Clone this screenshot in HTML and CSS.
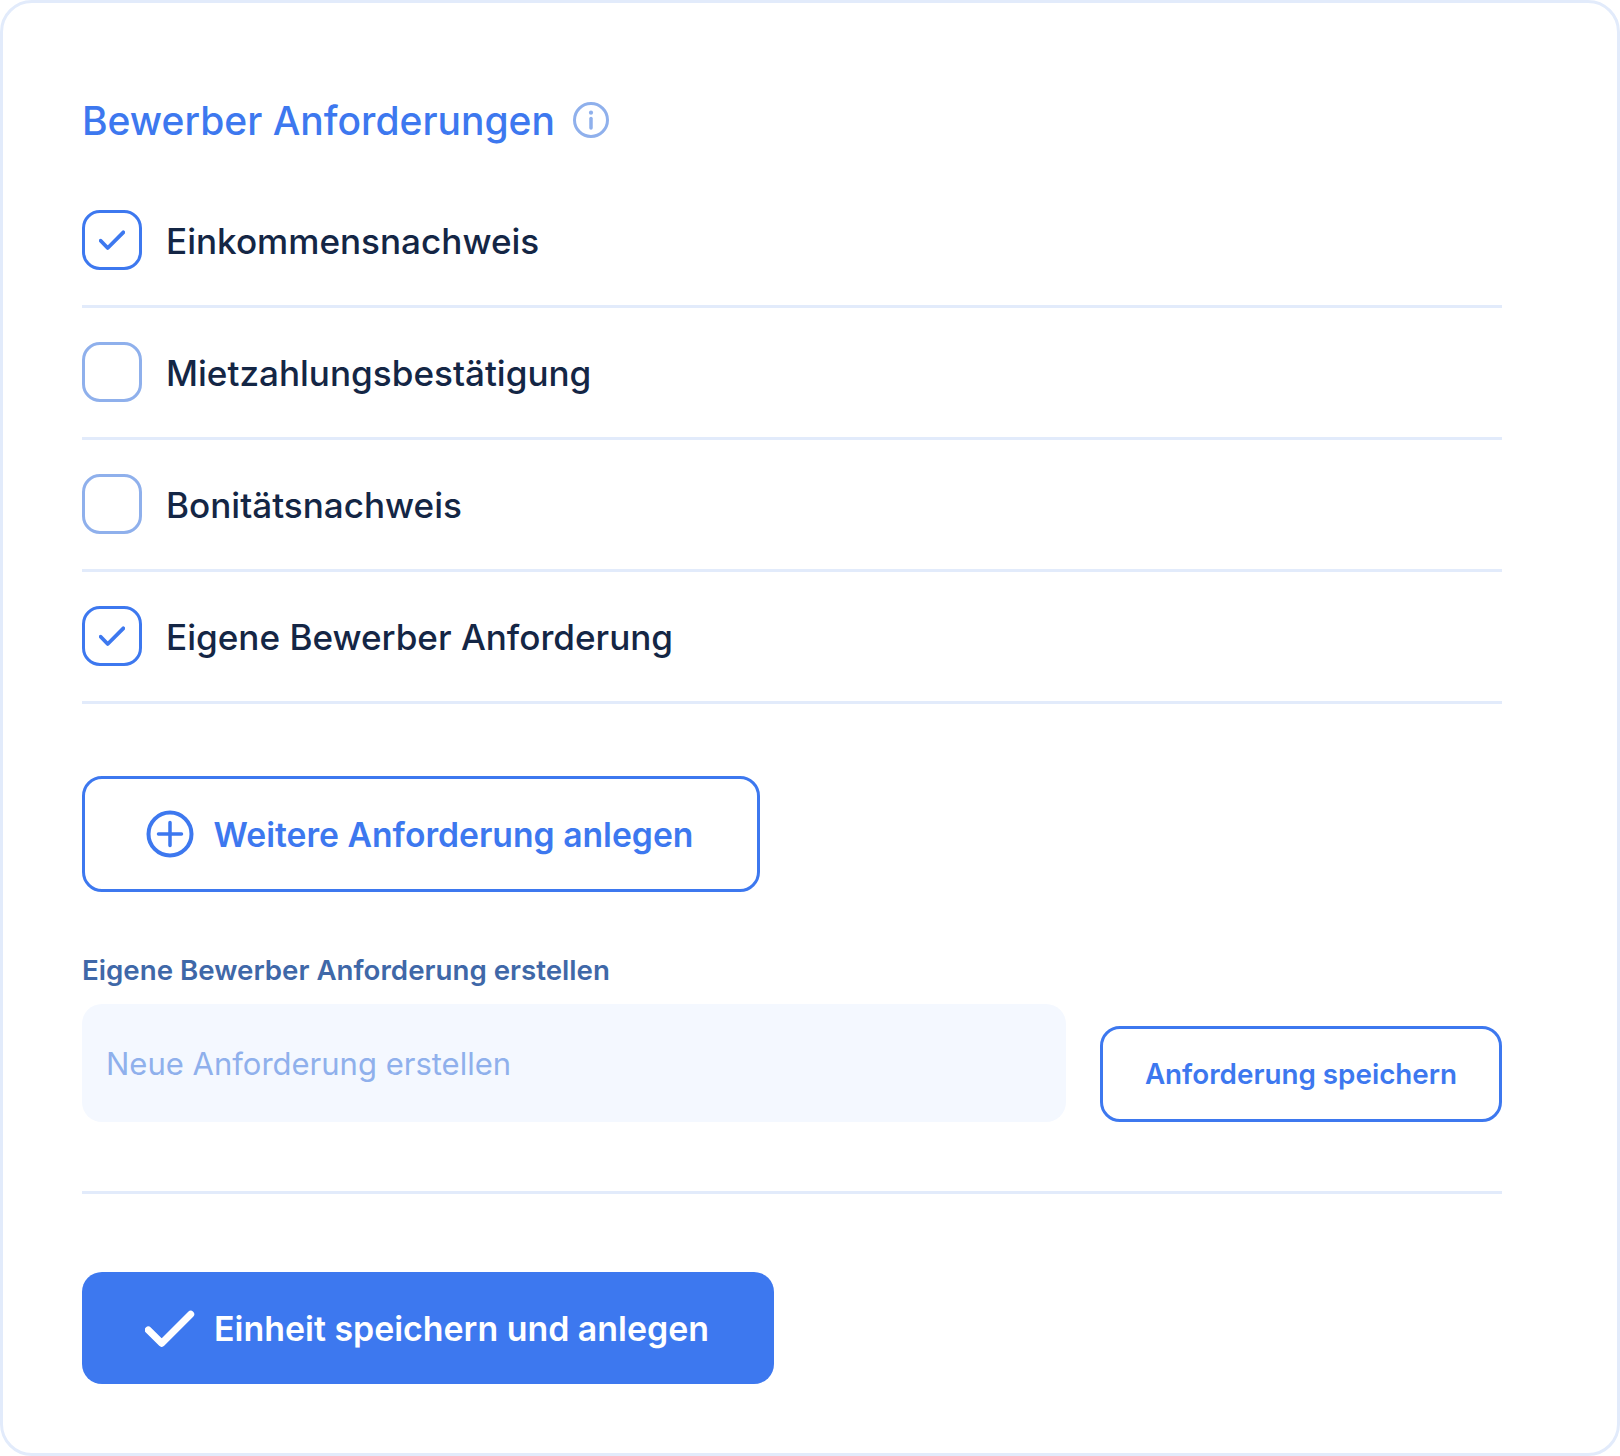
FILE: index.html
```html
<!DOCTYPE html>
<html lang="de">
<head>
    <meta charset="UTF-8">
    <title>Bewerber Anforderungen</title>
    <link rel="stylesheet" href="styles.css">
</head>
<body>
    <div class="card">
        <h2 class="title">
            <span class="title-text">Bewerber Anforderungen</span>
            <svg class="info-icon" viewBox="0 0 36 36" fill="none" stroke="#8fb0ec" stroke-width="3">
                <circle cx="18" cy="18" r="16.500"/>
                <path d="M18 16.500v9.500" stroke-width="3.500" stroke-linecap="round"/>
                <circle cx="18" cy="10.700" r="2.100" fill="#8fb0ec" stroke="none"/>
            </svg>
        </h2>

        <div class="req-row">
            <span class="checkbox checked">
                <svg viewBox="0 0 26 22" fill="none"><path d="M1.700 11.700L8.700 19 24.300 3.300" stroke="#3d78ef" stroke-width="3.800" stroke-linecap="round" stroke-linejoin="round"/></svg>
            </span>
            <span class="req-label">Einkommensnachweis</span>
        </div>
        <div class="req-row">
            <span class="checkbox"></span>
            <span class="req-label">Mietzahlungsbestätigung</span>
        </div>
        <div class="req-row">
            <span class="checkbox"></span>
            <span class="req-label">Bonitätsnachweis</span>
        </div>
        <div class="req-row">
            <span class="checkbox checked">
                <svg viewBox="0 0 26 22" fill="none"><path d="M1.700 11.700L8.700 19 24.300 3.300" stroke="#3d78ef" stroke-width="3.800" stroke-linecap="round" stroke-linejoin="round"/></svg>
            </span>
            <span class="req-label">Eigene Bewerber Anforderung</span>
        </div>

        <button class="button outline add-button">
            <svg class="plus-icon" viewBox="0 0 50 50" fill="none" stroke="#3d78ef" stroke-width="4">
                <circle cx="25" cy="25" r="21.500"/>
                <path d="M25 13.500v23M13.500 25h23" stroke-width="3.500" stroke-linecap="round"/>
            </svg>
            Weitere Anforderung anlegen
        </button>

        <label class="field-label">Eigene Bewerber Anforderung erstellen</label>
        <div class="field-row">
            <div class="input-box">Neue Anforderung erstellen</div>
            <button class="button outline save-button">Anforderung speichern</button>
        </div>

        <div class="divider"></div>

        <button class="button primary">
            <svg class="check-icon" viewBox="0 0 50 38" fill="none"><path d="M3.300 21L16.700 34.300 45.700 5.300" stroke="#fff" stroke-width="7" stroke-linecap="round" stroke-linejoin="round"/></svg>
            Einheit speichern und anlegen
        </button>
    </div>
</body>
</html>
```

FILE: styles.css
```css
* {
    box-sizing: border-box;
}
body {
    margin: 0;
    background-color: #fff;
    font-family: 'Inter', 'Liberation Sans', sans-serif;
}
.card {
    width: 1620px;
    height: 1456px;
    padding: 94px 115px 0 79px;
    border: 3px solid #e2ebfb;
    border-radius: 32px;
    background-color: #fff;
}
.title {
    display: flex;
    align-items: center;
    gap: 18px;
    height: 46px;
    margin: 0 0 33px;
    font-size: 39px;
    font-weight: 500;
    color: #3d78ef;
}
.title-text {
    padding-top: 1px;
}
.info-icon {
    width: 36px;
    height: 36px;
}
.req-row {
    display: flex;
    align-items: center;
    gap: 24px;
    height: 132px;
    border-bottom: 3px solid #e2ebfb;
}
.checkbox {
    display: flex;
    align-items: center;
    justify-content: center;
    width: 60px;
    height: 60px;
    margin-bottom: 2px;
    border: 3px solid #8fb0ec;
    border-radius: 18px;
}
.checkbox.checked {
    border-color: #3d78ef;
}
.checkbox svg {
    width: 26px;
    height: 22px;
}
.req-label {
    font-size: 35.100px;
    font-weight: 500;
    color: #142645;
}
.button {
    display: flex;
    align-items: center;
    justify-content: center;
    font-family: inherit;
    font-weight: 600;
    border-radius: 20px;
}
.outline {
    background-color: #fff;
    border: 3px solid #3d78ef;
    color: #3d78ef;
}
.add-button {
    gap: 19px;
    width: 678px;
    height: 116px;
    margin-top: 72px;
    padding: 0 4px 0 0;
    font-size: 33.700px;
}
.plus-icon {
    width: 50px;
    height: 50px;
}
.field-label {
    display: block;
    margin-top: 62px;
    font-size: 27.700px;
    font-weight: 600;
    line-height: 33px;
    color: #3f68a8;
}
.field-row {
    display: flex;
    align-items: flex-end;
    gap: 34px;
    margin-top: 17px;
}
.input-box {
    display: flex;
    align-items: center;
    width: 984px;
    height: 118px;
    padding-left: 24px;
    border-radius: 20px;
    background-color: #f4f8ff;
    font-size: 31px;
    color: #8fb0ec;
}
.save-button {
    width: 402px;
    height: 96px;
    font-size: 27.800px;
}
.divider {
    height: 3px;
    margin-top: 69px;
    background-color: #e2ebfb;
}
.primary {
    gap: 19px;
    width: 692px;
    height: 112px;
    margin-top: 78px;
    padding: 0 2px 0 0;
    border: none;
    background-color: #3d78ef;
    color: #fff;
    font-size: 33.900px;
}
.check-icon {
    width: 50px;
    height: 38px;
}
```
